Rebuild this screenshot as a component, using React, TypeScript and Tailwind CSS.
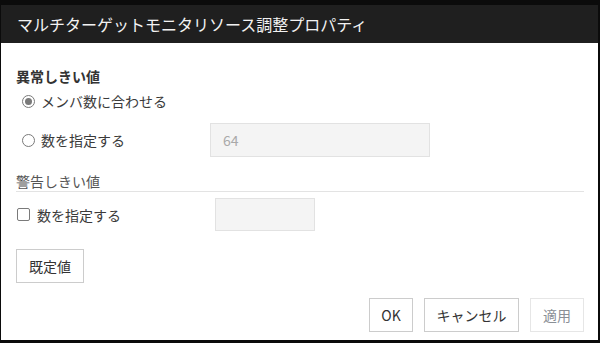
import React from "react";

function Radio({ checked }: { checked?: boolean }) {
  return (
    <span className="flex h-[13px] w-[13px] items-center justify-center rounded-full border border-[#7a7a7a] bg-white">
      {checked && <span className="h-[7px] w-[7px] rounded-full bg-[#7a7a7a]" />}
    </span>
  );
}

export default function App() {
  return (
    <div
      className="h-[343px] w-[600px] bg-[#0b0b0b] pt-[5px] pl-[1px] pr-[2px] pb-[3px] text-[#3a3a3a] text-[14px]"
      style={{ fontFamily: '"Noto Sans CJK JP", "Noto Sans", sans-serif' }}
    >
      <div className="flex h-full flex-col bg-white">
        {/* HEADER */}
        <div className="flex h-[38px] shrink-0 items-center bg-[#1f1f1f] pl-[16px] text-[16px] text-[#f2f2f2]">
          マルチターゲットモニタリソース調整プロパティ
        </div>

        {/* BODY */}
        <div className="flex flex-1 flex-col pl-[15px] pr-[14px] pt-[23px]">
          <div className="h-[20px] leading-[20px] font-semibold text-[#333]">異常しきい値</div>

          <label className="mt-[3px] flex h-[24px] items-center gap-[6px] pl-[6px]">
            <Radio checked />
            <span className="leading-[20px]">メンバ数に合わせる</span>
          </label>

          <div className="mt-[10px] flex h-[34px] items-center">
            <label className="flex w-[194px] items-center gap-[6px] pl-[6px]">
              <Radio />
              <span className="leading-[20px]">数を指定する</span>
            </label>
            <div className="flex h-[34px] w-[220px] items-center border border-[#e2e2e2] bg-[#f4f4f4] pl-[12px] text-[#a9a9a9]">
              64
            </div>
          </div>

          <div className="mt-[14px] h-[21px] border-b border-[#e3e3e3] leading-[20px] text-[#555]">
            警告しきい値
          </div>

          <div className="mt-[6px] flex h-[33px] items-center">
            <label className="flex w-[199px] items-center gap-[7px] pl-[1px]">
              <span className="h-[13px] w-[13px] rounded-[2px] border border-[#7a7a7a] bg-white" />
              <span className="leading-[20px]">数を指定する</span>
            </label>
            <div className="h-[33px] w-[100px] border border-[#e2e2e2] bg-[#f4f4f4]" />
          </div>

          <div className="mt-[18px] flex">
            <button className="h-[34px] w-[68px] border border-[#cccccc] bg-white text-[#333]">既定値</button>
          </div>

          <div className="mt-[15px] flex justify-end gap-[11px]">
            <button className="h-[34px] w-[44px] border border-[#cccccc] bg-white text-[#333]">OK</button>
            <button className="h-[34px] w-[95px] border border-[#cccccc] bg-white text-[#333]">キャンセル</button>
            <button className="h-[34px] w-[54px] border border-[#e6e6e6] bg-white text-[#8a8f96]">適用</button>
          </div>
        </div>
      </div>
    </div>
  );
}
